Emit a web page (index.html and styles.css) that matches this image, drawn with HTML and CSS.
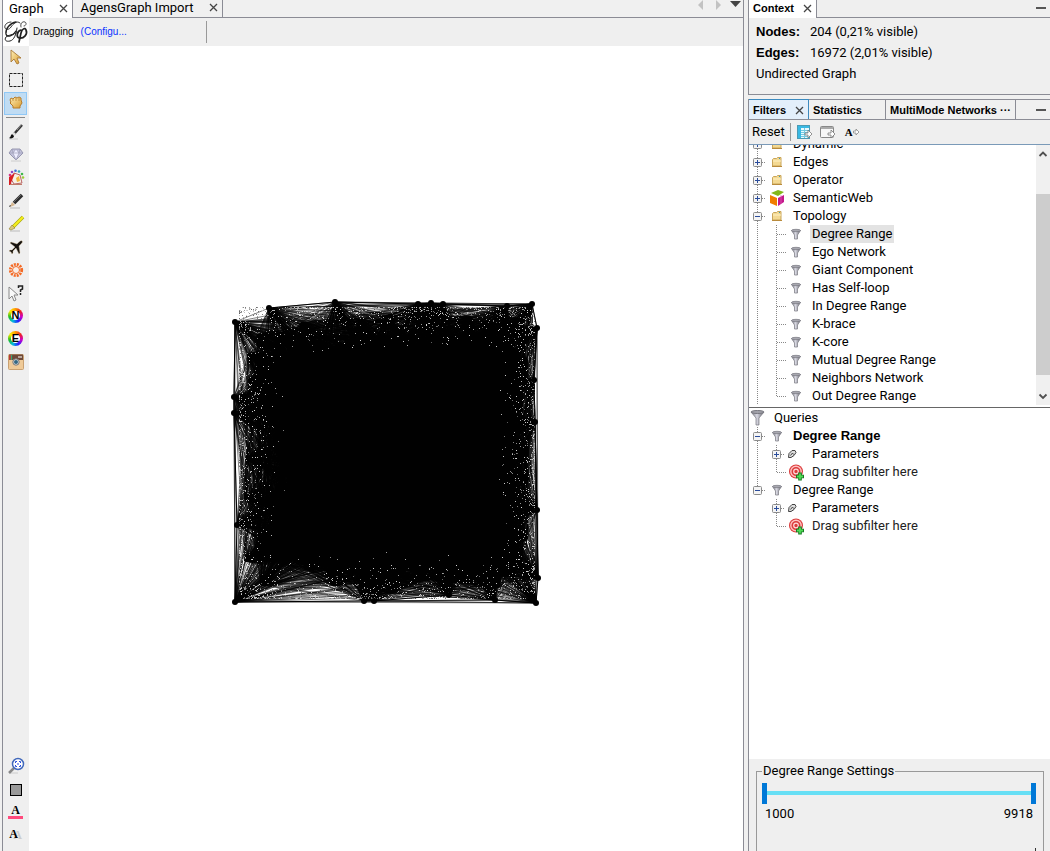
FILE: index.html
```html
<!DOCTYPE html>
<html lang="en">
<head>
    <meta charset="utf-8">
    <meta name="viewport" content="width=device-width, initial-scale=1">
    <title>Gephi</title>
    <link rel="stylesheet" href="styles.css">
</head>
<body>
    <!-- shared icons -->
    <svg class="defs" aria-hidden="true">
        <defs>
            <linearGradient id="gold" x1="0" y1="0" x2="1" y2="1"><stop offset="0" stop-color="#fff0b8"/><stop offset="1" stop-color="#d99a2b"/></linearGradient>
            <linearGradient id="steel"><stop offset="0" stop-color="#77777f"/><stop offset=".45" stop-color="#d8d8e2"/><stop offset="1" stop-color="#66666e"/></linearGradient>
            <symbol id="close" viewBox="0 0 9 9"><path d="M1 1l7 7M8 1L1 8" stroke="#444" stroke-width="1.3"/></symbol>
            <symbol id="twig-mid" viewBox="0 0 15 18"><path d="M4.500 0v18M5 9.500h9" class="dots"/></symbol>
            <symbol id="twig-end" viewBox="0 0 15 18"><path d="M4.500 0v9M5 9.500h9" class="dots"/></symbol>
            <symbol id="minus" viewBox="0 0 15 18"><path d="M4.500 0v18M9 9.500h4" class="dots"/><rect x=".5" y="5.500" width="8" height="8" rx="1" fill="#f4f4f4" stroke="#8b8b8b"/><path d="M2 9.500h5" stroke="#2a4c9b"/></symbol>
            <symbol id="plus" viewBox="0 0 15 18"><path d="M4.500 0v18M9 9.500h4" class="dots"/><rect x=".5" y="5.500" width="8" height="8" rx="1" fill="#f4f4f4" stroke="#8b8b8b"/><path d="M2 9.500h5M4.500 7v5" stroke="#2a4c9b"/></symbol>
            <symbol id="minus-end" viewBox="0 0 15 18"><path d="M4.500 0v9M9 9.500h4" class="dots"/><rect x=".5" y="5.500" width="8" height="8" rx="1" fill="#f4f4f4" stroke="#8b8b8b"/><path d="M2 9.500h5" stroke="#2a4c9b"/></symbol>
            <symbol id="folder" viewBox="0 0 18 18"><path d="M4.500 13V6.500l1-1h3l1-1h3.500V13z" fill="#f4d992" stroke="#c9a55a"/><path d="M5 8h8" stroke="#fff2c6"/><path d="M4 13.500h10" stroke="#b98b3c"/><path d="M11 5.500h1" stroke="#3c9ab8"/></symbol>
            <symbol id="funnel" viewBox="0 0 18 18"><path d="M4.500 5.500h9L10.500 10v4h-3v-4z" fill="url(#steel)" stroke="#85858d" stroke-width=".8"/><ellipse cx="9" cy="5.500" rx="4.500" ry="1.200" fill="#a8a8b0" stroke="#77777f" stroke-width=".7"/></symbol>
            <symbol id="cube" viewBox="0 0 18 18"><path d="M3 4l7-3 6 2-6 4z" fill="#83b81a"/><path d="M2 6l7 3v8l-7-3z" fill="#f07d00"/><path d="M10 9l6-3v7l-6 4z" fill="#c4188c"/><path d="M13 6v9" stroke="#e45fb8" stroke-width=".7"/></symbol>
            <symbol id="wrench" viewBox="0 0 18 18"><path d="M1.500 12.500l.5-4L5 5.500h3l1 2-2 3-3 2z" fill="#ddd" stroke="#444"/><path d="M3.500 10.500l2-2.500 1 1.500" fill="none" stroke="#444"/></symbol>
            <symbol id="target" viewBox="0 0 18 18"><circle cx="9" cy="8.500" r="7" fill="#dc3c3c"/><circle cx="9" cy="8.500" r="5.200" fill="none" stroke="#ffc2c2" stroke-width="1.400"/><circle cx="9" cy="8.500" r="2.300" fill="none" stroke="#ffdada" stroke-width="1.200"/><path d="M13 9.500v8M9 13.500h8" stroke="#167a22" stroke-width="3.600"/><path d="M13 10.500v6M10 13.500h6" stroke="#4fdc55" stroke-width="1.800"/></symbol>
        </defs>
    </svg>

    <div class="app">
        <main class="graph-window">
            <div class="tabs">
                <div class="tab active"><button>Graph</button><button class="close" aria-label="Close Graph"><svg><use href="#close"/></svg></button></div>
                <div class="tab import"><button>AgensGraph Import</button><button class="close" aria-label="Close Import"><svg><use href="#close"/></svg></button></div>
                <div class="tab-nav">
                    <svg viewBox="0 0 46 12"><path d="M6 0v10L1 5z" fill="#c2c2c2"/><path d="M19 0v10l5-5z" fill="#c2c2c2"/><path d="M33 1h11l-5.500 6z" fill="#444"/></svg>
                </div>
            </div>
            <div class="props">
                <svg class="logo" viewBox="0 0 26 28"><g fill="none" stroke="#222" stroke-linecap="round"><path d="M17 5C14 2 10 6 8 9c-2 3-5 3-6 1-1-3 2-6 6-6" stroke-width=".9"/><path d="M13 4C7 5 2 11 3 16c1 4 7 2 10-3" stroke-width="1.300"/><path d="M14 10c-1 7-3 12-7 13-4 1-6-1-4-4 2-2 7-2 12-5" stroke-width="1"/><path d="M18 12c-4 1-5 7-2 8 5 1 9-4 7-8-1-3-4-1-5 3l-2 9" stroke-width="1.700"/><path d="M18 9c-1-3 1-6 4-5 2 1 1 4-1 4" stroke-width=".8"/></g></svg>
                <span class="mode">Dragging</span>
                <a class="configure" href="#">(Configu...</a>
                <span class="divider"></span>
            </div>
            <div class="work">
                <div class="tools">
                    <button aria-label="Select"><svg viewBox="0 0 18 18"><path d="M4 2v12l3-3 3 5 2-1-2-5h4z" fill="url(#gold)" stroke="#a87835" stroke-width=".9"/></svg></button>
                    <button aria-label="Rectangle selection"><svg viewBox="0 0 18 18"><rect x="2.500" y="2.500" width="13" height="13" fill="none" stroke="#222" stroke-dasharray="3 1"/></svg></button>
                    <button class="on" aria-label="Drag"><svg viewBox="0 0 18 18"><path d="M4 8L3 6l1-2 2 1 2-2 2 1 2-1 2 1v2l1 3-2 3v2H6v-2L3 9z" fill="url(#gold)" stroke="#b67b28"/><path d="M6 5v2M9 4v3M12 4v3" stroke="#b67b28" stroke-width=".7"/></svg></button>
                    <hr>
                    <button aria-label="Painter"><svg viewBox="0 0 18 18"><path d="M2 16h9" stroke="#ccc"/><path d="M15 2L7 11" stroke="#333" stroke-width="2.500"/><path d="M15 1l-5 6" stroke="#aaa" stroke-width=".8"/><path d="M8 10l-2 2" stroke="#ddd" stroke-width="3"/><path d="M5 11l2 2c0 2-3 3-5 2 2-1 1-2 3-4z" fill="#111"/></svg></button>
                    <button aria-label="Sizer"><svg viewBox="0 0 18 18"><path d="M5 3h8l3 4-7 7-7-7z" fill="#c4c4dc" stroke="#8e8ea8" stroke-width=".9"/><path d="M2 7h14M6 7l3 7 3-7-3-4zM5 3l1 4M13 3l-1 4" fill="#eeeeff" stroke="#9d9db8" stroke-width=".7"/><path d="M4 15h10" stroke="#ccc"/></svg></button>
                    <button aria-label="Brush"><svg viewBox="0 0 18 18"><g><circle cx="3" cy="6" r="1.300" fill="#d2338a"/><circle cx="5" cy="3" r="1.300" fill="#8d46c7"/><circle cx="8.500" cy="1.800" r="1.300" fill="#3c6ed8"/><circle cx="12" cy="2.500" r="1.300" fill="#36a7b8"/><circle cx="15" cy="5" r="1.300" fill="#40b848"/><circle cx="16" cy="8.500" r="1.300" fill="#9dcc36"/></g><path d="M7 4l6 2 2 8-8 1-3-5z" fill="#f7f1e6" stroke="#b66"/><path d="M2 8l6-4-4 10 1 2H2z" fill="#d71f22"/><path d="M9 9l3-2 1 5-3 1z" fill="#f0b63e"/><path d="M3 15.500h12" stroke="#bf7b69"/></svg></button>
                    <button aria-label="Node pencil"><svg viewBox="0 0 18 18"><path d="M3 16h10" stroke="#bbb"/><path d="M15 3L7 11" stroke="#2b2b2b" stroke-width="3.500"/><path d="M14 3l-7 7" stroke="#777" stroke-width=".8"/><path d="M5 10l3 3-5 2z" fill="#d6b68e"/><path d="M3 13l1 1-2 1z" fill="#111"/></svg></button>
                    <button aria-label="Edge pencil"><svg viewBox="0 0 18 18"><path d="M3 16h10" stroke="#bbb"/><path d="M16 2L6 12" stroke="#aaa815" stroke-width="3.500"/><path d="M16 2L6 12" stroke="#f5f01c" stroke-width="2.200"/><path d="M5 10l3 3-4 2-2-1z" fill="#d8c77c" stroke="#8e7c23" stroke-width=".6"/></svg></button>
                    <button aria-label="Shortest path"><svg viewBox="0 0 18 18"><path d="M15 3c1 1 0 2-3 5l1 7-1 1-3-6-3 3v2l-1 1-1-2-2-1 1-1h2l3-3-5-4 1-1 6 2c2-2 4-4 5-3z" fill="#15110d" stroke="#d6c19b" stroke-width=".4"/></svg></button>
                    <button aria-label="Heat map"><svg viewBox="0 0 18 18"><circle cx="9" cy="9" r="5.700" fill="none" stroke="#f46a25" stroke-width="2.800" stroke-dasharray="2 1"/><circle cx="9" cy="9" r="3.500" fill="#f8eee8" stroke="#f46a25"/></svg></button>
                    <button aria-label="Edit"><svg viewBox="0 0 18 18"><path d="M2 3v12l3-3 2 5 2-1-2-5h4z" fill="#fafafa" stroke="#888"/><path d="M11.500 4V2h4v3l-2 1v2M13.500 9v2" fill="none" stroke="#222" stroke-width="1.500"/></svg></button>
                    <button aria-label="Node color"><span class="wheel">N</span></button>
                    <button aria-label="Edge color"><span class="wheel edge">E</span></button>
                    <button aria-label="Screenshot"><svg viewBox="0 0 18 18"><rect x="1.500" y="1.500" width="15" height="15" rx="1" fill="#efca98" stroke="#c9a172"/><path d="M2 1.500h14V7H2z" fill="#6d4838"/><path d="M3 2v5" stroke="#e33" stroke-width="1.200"/><path d="M4.500 2v5" stroke="#3a7" stroke-width="1.200"/><path d="M11 3h4v2h-4z" fill="#b9a69b"/><circle cx="9" cy="9" r="3.200" fill="#ddd" stroke="#777"/><circle cx="9" cy="9" r="2" fill="#336783"/></svg></button>
                    <span class="spring"></span>
                    <button aria-label="Center on graph"><svg viewBox="0 0 18 18"><path d="M3 16h8" stroke="#ccc"/><path d="M7 11l-5 5" stroke="#888" stroke-width="2.500"/><circle cx="11" cy="7" r="5.500" fill="#fff" stroke="#4269bb" stroke-width="1.500"/><path d="M8.500 6V4.500H10M12 4.500h1.500V6M13.500 8v1.500H12M10 9.500H8.500V8" fill="none" stroke="#2a4edb"/><path d="M10 7h2" stroke="#2a4edb"/></svg></button>
                    <button aria-label="Background color"><svg viewBox="0 0 18 18"><rect x="3.500" y="3.500" width="11" height="11" fill="#999" stroke="#000"/></svg></button>
                    <button aria-label="Label color"><span class="letter pink">A</span></button>
                    <button aria-label="Label size"><span class="letter shadow">A</span></button>
                </div>
                <div class="view"><canvas id="graph" width="310" height="308"></canvas></div>
            </div>
        </main>

        <aside class="side">
            <section class="context">
                <div class="tabs">
                    <div class="tab active"><button>Context</button><button class="close" aria-label="Close Context"><svg><use href="#close"/></svg></button></div>
                    <button class="minimize" aria-label="Minimize"></button>
                </div>
                <dl>
                    <dt>Nodes:</dt><dd>204 (0,21% visible)</dd>
                    <dt>Edges:</dt><dd>16972 (2,01% visible)</dd>
                </dl>
                <p>Undirected Graph</p>
            </section>

            <section class="filters">
                <div class="tabs">
                    <div class="tab current"><button>Filters</button><button class="close" aria-label="Close Filters"><svg><use href="#close"/></svg></button></div>
                    <div class="tab stats"><button>Statistics</button></div>
                    <div class="tab"><button>MultiMode Networks ···</button></div>
                    <button class="minimize" aria-label="Minimize"></button>
                </div>
                <div class="filter-bar">
                    <button>Reset</button>
                    <span class="divider"></span>
                    <button aria-label="Export column"><svg viewBox="0 0 18 16"><rect x="1.500" y="1.500" width="12" height="13" fill="#e9faff" stroke="#4c9bb4"/><path d="M2 2h11v2H2zM2 4h3v10H2z" fill="#39b9e4"/><path d="M5 6.500h8M5 8.500h8M5 10.500h8M5 12.500h8M8.500 4v10" stroke="#75c9e0"/><path d="M9 9h3V6l4 4-4 4v-3H9z" fill="#fff" stroke="#777" stroke-width=".8"/></svg></button>
                    <button aria-label="Export workspace"><svg viewBox="0 0 18 16"><rect x="1.500" y="2.500" width="13" height="11" rx="1" fill="#f7f7f7" stroke="#888"/><path d="M2 4h12" stroke="#aaa" stroke-width="2"/><path d="M9 9h3V6l4 4-4 4v-3H9z" fill="#fff" stroke="#777" stroke-width=".8"/></svg></button>
                    <button class="hide-labels" aria-label="Hide labels"><span>A</span><svg viewBox="0 0 7 8"><path d="M.5 3H3V1l3 3-3 3V5H.5z" fill="#fff" stroke="#888" stroke-width=".8"/></svg></button>
                </div>
                <div class="library">
                    <ul class="tree">
                        <li class="more"><div class="row"><button class="twig" aria-label="Expand"><svg><use href="#plus"/></svg></button><svg class="icon"><use href="#folder"/></svg><span>Dynamic</span></div></li>
                        <li class="more"><div class="row"><button class="twig" aria-label="Expand"><svg><use href="#plus"/></svg></button><svg class="icon"><use href="#folder"/></svg><span>Edges</span></div></li>
                        <li class="more"><div class="row"><button class="twig" aria-label="Expand"><svg><use href="#plus"/></svg></button><svg class="icon"><use href="#folder"/></svg><span>Operator</span></div></li>
                        <li class="more"><div class="row"><button class="twig" aria-label="Expand"><svg><use href="#plus"/></svg></button><svg class="icon"><use href="#cube"/></svg><span>SemanticWeb</span></div></li>
                        <li class="more"><div class="row"><button class="twig" aria-label="Collapse"><svg><use href="#minus"/></svg></button><svg class="icon"><use href="#folder"/></svg><span>Topology</span></div>
                            <ul>
                                <li><div class="row"><svg class="twig"><use href="#twig-mid"/></svg><svg class="icon"><use href="#funnel"/></svg><span class="selected">Degree Range</span></div></li>
                                <li><div class="row"><svg class="twig"><use href="#twig-mid"/></svg><svg class="icon"><use href="#funnel"/></svg><span>Ego Network</span></div></li>
                                <li><div class="row"><svg class="twig"><use href="#twig-mid"/></svg><svg class="icon"><use href="#funnel"/></svg><span>Giant Component</span></div></li>
                                <li><div class="row"><svg class="twig"><use href="#twig-mid"/></svg><svg class="icon"><use href="#funnel"/></svg><span>Has Self-loop</span></div></li>
                                <li><div class="row"><svg class="twig"><use href="#twig-mid"/></svg><svg class="icon"><use href="#funnel"/></svg><span>In Degree Range</span></div></li>
                                <li><div class="row"><svg class="twig"><use href="#twig-mid"/></svg><svg class="icon"><use href="#funnel"/></svg><span>K-brace</span></div></li>
                                <li><div class="row"><svg class="twig"><use href="#twig-mid"/></svg><svg class="icon"><use href="#funnel"/></svg><span>K-core</span></div></li>
                                <li><div class="row"><svg class="twig"><use href="#twig-mid"/></svg><svg class="icon"><use href="#funnel"/></svg><span>Mutual Degree Range</span></div></li>
                                <li><div class="row"><svg class="twig"><use href="#twig-mid"/></svg><svg class="icon"><use href="#funnel"/></svg><span>Neighbors Network</span></div></li>
                                <li><div class="row"><svg class="twig"><use href="#twig-end"/></svg><svg class="icon"><use href="#funnel"/></svg><span>Out Degree Range</span></div></li>
                            </ul>
                        </li>
                    </ul>
                    <div class="scrollbar">
                        <svg viewBox="0 0 14 17"><path d="M3.500 11L7 7.500l3.500 3.500" fill="none" stroke="#505050" stroke-width="1.800"/></svg>
                        <span class="thumb"></span>
                        <svg viewBox="0 0 14 17"><path d="M3.500 6.500L7 10l3.500-3.500" fill="none" stroke="#505050" stroke-width="1.800"/></svg>
                    </div>
                </div>
                <div class="queries">
                    <div class="root"><svg viewBox="0 0 16 18"><path d="M2 3h13l-5 6v7H7V9z" fill="url(#steel)" stroke="#77777f" stroke-width=".7"/><ellipse cx="8.500" cy="3" rx="6.500" ry="1.500" fill="#a2a2aa" stroke="#77777f"/></svg><span>Queries</span></div>
                    <ul class="tree">
                        <li class="more"><div class="row"><button class="twig" aria-label="Collapse"><svg><use href="#minus"/></svg></button><svg class="icon"><use href="#funnel"/></svg><strong>Degree Range</strong></div>
                            <ul>
                                <li><div class="row"><button class="twig" aria-label="Expand"><svg><use href="#plus"/></svg></button><svg class="icon"><use href="#wrench"/></svg><span>Parameters</span></div></li>
                                <li><div class="row"><svg class="twig"><use href="#twig-end"/></svg><svg class="icon"><use href="#target"/></svg><span class="hint">Drag subfilter here</span></div></li>
                            </ul>
                        </li>
                        <li><div class="row"><button class="twig" aria-label="Collapse"><svg><use href="#minus-end"/></svg></button><svg class="icon"><use href="#funnel"/></svg><span>Degree Range</span></div>
                            <ul>
                                <li><div class="row"><button class="twig" aria-label="Expand"><svg><use href="#plus"/></svg></button><svg class="icon"><use href="#wrench"/></svg><span>Parameters</span></div></li>
                                <li><div class="row"><svg class="twig"><use href="#twig-end"/></svg><svg class="icon"><use href="#target"/></svg><span class="hint">Drag subfilter here</span></div></li>
                            </ul>
                        </li>
                    </ul>
                </div>
                <div class="settings">
                    <fieldset>
                        <legend>Degree Range Settings</legend>
                        <div class="range">
                            <input type="range" aria-label="Lower bound" min="1000" max="9918" value="1000">
                            <input type="range" aria-label="Upper bound" min="1000" max="9918" value="9918">
                        </div>
                        <div class="bounds"><span>1000</span><span>9918</span></div>
                        <div class="grip"></div>
                    </fieldset>
                </div>
            </section>
        </aside>
    </div>
    <script src="graph.js"></script>
</body>
</html>
```
FILE: styles.css
```css
* {
    box-sizing: border-box;
}

html, body {
    height: 100%;
}

body {
    margin: 0;
    background: #f0f0f0;
    color: #000;
    font: 13px/18px Roboto, Arial, sans-serif;
    overflow: hidden;
}

button {
    display: flex;
    align-items: center;
    justify-content: center;
    padding: 0;
    border: 0;
    background: none;
    color: inherit;
    font: inherit;
    white-space: nowrap;
}

ul {
    list-style: none;
    margin: 0;
    padding: 0;
}

strong, dt {
    font-family: "Liberation Sans", Arial, sans-serif;
    font-weight: bold;
}

.defs {
    display: block;
    width: 0;
    height: 0;
}

.dots {
    fill: none;
    stroke: #888;
    stroke-dasharray: 1 1;
}

.app {
    display: flex;
    gap: 4px;
    height: 100%;
    padding-left: 2px;
}

/* tabs */

.tabs {
    display: flex;
    height: 18px;
    flex: none;
    border-bottom: 1px solid #8b8c95;
}

.tab {
    display: flex;
    align-items: center;
    gap: 9px;
    height: 17px;
    padding: 0 4px;
    border-right: 1px solid #8b8c95;
    line-height: 15px;
}

.tab.active {
    height: 18px;
    padding-bottom: 2px;
    background: #fff;
}

.close svg {
    display: block;
    width: 9px;
    height: 9px;
}

.minimize {
    width: 10px;
    height: 2px;
    margin: 7px 4px 0 auto;
    background: #555;
}

.divider {
    width: 1px;
    height: 22px;
    background: #999;
}

/* graph window */

.graph-window {
    display: flex;
    flex-direction: column;
    flex: 1;
    min-width: 0;
    border: solid #8b8c95;
    border-width: 0 1px;
}

.graph-window .tab {
    padding-left: 6px;
    padding-bottom: 2px;
    gap: 15px;
}

.graph-window .import {
    padding-left: 8px;
}

.tab-nav {
    margin-left: auto;
}

.tab-nav svg {
    display: block;
    width: 46px;
    height: 12px;
}

.props {
    display: flex;
    align-items: center;
    height: 28px;
    flex: none;
    background: #efefef;
    font: 10px/18px "Liberation Sans", Arial, sans-serif;
}

.logo {
    width: 26px;
    height: 28px;
    background: #fff;
}

.mode {
    padding-left: 4px;
}

.configure {
    width: 132px;
    padding-left: 7px;
    color: #0a32ff;
    text-decoration: none;
}

.work {
    display: flex;
    flex: 1;
    min-height: 0;
}

.tools {
    display: flex;
    flex-direction: column;
    width: 26px;
    padding: 0 2px 2px 1px;
    background: #efefef;
}

.tools button {
    height: 23px;
    flex: none;
    align-items: flex-start;
    padding-top: 2px;
}

.tools svg {
    width: 18px;
    height: 18px;
}

.tools .on {
    padding-top: 1px;
    background: #c0dcf3;
    border: 1px solid #90c8f6;
}

.tools hr {
    width: 19px;
    margin: 2px 2px 3px;
    border: 0;
    border-top: 1px solid #888;
}

.tools .spring {
    flex: 1;
}

.tools .spring ~ button {
    height: 24px;
    padding-top: 4px;
}

.wheel {
    width: 15px;
    height: 15px;
    margin-top: 1px;
    border-radius: 50%;
    background: radial-gradient(circle, #fff 4px, transparent 5px), conic-gradient(#f90, #e22, #c0c, #22f, #0bd, #2b2, #fe0, #f90);
    font: bold 11px/15px "Liberation Sans", Arial, sans-serif;
}

.letter {
    width: 15px;
    font: bold 12px/11px "Liberation Serif", serif;
}

.letter.pink {
    border-bottom: 3px solid #ff4a7d;
}

.letter.shadow {
    padding-right: 4px;
    text-shadow: 4px 1px #ccc;
}

.view {
    display: grid;
    place-content: center;
    flex: 1;
    min-width: 0;
    padding-top: 8px;
    background: #fff;
    overflow: hidden;
}

.view canvas {
    display: block;
}

/* right column */

.side {
    display: flex;
    flex-direction: column;
    gap: 4px;
    width: 302px;
}

.context {
    height: 95px;
    flex: none;
    border: solid #8b8c95;
    border-width: 0 0 1px 1px;
    background: #efefef;
}

.side .tabs {
    font: bold 11px/15px "Liberation Sans", Arial, sans-serif;
}

.context dl {
    display: grid;
    grid-template-columns: 54px 1fr;
    row-gap: 3px;
    margin: 5px 7px 3px;
}

.context dd {
    margin: 0;
}

.context p {
    margin: 0 7px;
}

.filters {
    display: flex;
    flex-direction: column;
    flex: 1;
    min-height: 0;
    border-left: 1px solid #8b8c95;
}

.filters .tabs {
    height: 21px;
    border-top: 1px solid #8b8c95;
}

.filters .tab {
    height: 19px;
    padding-top: 2px;
}

.filters .tab.current {
    background: #e3effb;
    border-right-color: #3c8abf;
    box-shadow: 0 -1px #3c8abf;
}

.filters .stats {
    width: 77px;
}

.filters .minimize {
    margin-top: 9px;
}

.filter-bar {
    display: flex;
    align-items: center;
    gap: 5px;
    height: 25px;
    flex: none;
    padding-left: 3px;
    border-bottom: 1px solid #7a9ab8;
    background: #efefef;
}

.filter-bar svg {
    width: 18px;
    height: 16px;
}

.filter-bar .divider {
    height: 18px;
}

.filter-bar .hide-labels {
    padding-left: 3px;
    font: bold 11px/16px "Liberation Serif", serif;
}

.filter-bar .hide-labels svg {
    width: 7px;
    height: 8px;
}

.library {
    display: flex;
    align-items: flex-end;
    height: 263px;
    flex: none;
    padding-bottom: 2px;
    border-bottom: 1px solid #666;
    background: #fff;
    overflow: hidden;
}

.tree {
    flex: 1;
    padding-left: 4px;
}

.tree ul {
    padding-left: 19px;
}

.more {
    background: linear-gradient(#888 1px, transparent 1px) 4px 0 / 1px 2px repeat-y;
}

.row {
    display: flex;
    height: 18px;
}

.twig {
    display: block;
    width: 15px;
    height: 18px;
    flex: none;
}

.twig svg {
    display: block;
    width: 15px;
    height: 18px;
}

.icon {
    width: 18px;
    height: 18px;
    margin-right: 5px;
    flex: none;
}

.row span, .row strong {
    padding: 0 2px;
}

.row .selected {
    background: #e3e3e3;
}

.row .hint {
    color: #222;
}

.scrollbar {
    display: flex;
    flex-direction: column;
    justify-content: space-between;
    width: 14px;
    height: 260px;
    background: #f0f0f0;
}

.scrollbar svg {
    width: 14px;
    height: 17px;
}

.thumb {
    height: 181px;
    margin-top: 18px;
    background: #cdcdcd;
}

.queries {
    flex: 1;
    min-height: 0;
    padding-top: 1px;
    background: #fff;
}

.root {
    display: flex;
    gap: 9px;
}

.root svg {
    width: 16px;
    height: 18px;
}

.settings {
    height: 92px;
    flex: none;
    padding: 3px 6px 0 7px;
    background: #efefef;
}

fieldset {
    height: 100%;
    margin: 0;
    padding: 0 7px 0 5px;
    border: 1px solid #999;
    border-bottom: 0;
}

legend {
    padding: 0 1px;
}

.range {
    display: grid;
    height: 26px;
    align-items: center;
    background: linear-gradient(#67dff5, #67dff5) center / 100% 4px no-repeat;
}

.range input {
    grid-area: 1 / 1;
    width: 100%;
    height: 21px;
    margin: 0;
    appearance: none;
    background: none;
    pointer-events: none;
}

.range input::-webkit-slider-thumb {
    appearance: none;
    width: 5px;
    height: 21px;
    background: #0078d7;
    pointer-events: auto;
}

.bounds {
    display: flex;
    justify-content: space-between;
    padding: 0 3px;
    line-height: 16px;
}

.grip {
    width: 1px;
    height: 3px;
    margin: 26px 0 0 auto;
    background: #333;
}
```
FILE: graph.js
```javascript
var ctx = document.getElementById('graph').getContext('2d');

// nodes on the hull of the layout
var hull = [
    [4, 23], [38, 9], [104, 3], [187, 5], [200, 4], [212, 5], [276, 7], [301, 5],
    [306, 29], [303, 81], [304, 123], [306, 211], [307, 279], [305, 304],
    [264, 301], [218, 296], [143, 302], [133, 302], [4, 303], [6, 226], [3, 114], [3, 98]
];
// nodes just inside it
var nodes = hull.concat([
    [17, 55], [70, 24], [130, 20], [158, 16], [240, 18], [262, 22], [292, 20],
    [296, 60], [297, 150], [297, 180], [296, 240], [290, 270], [268, 288],
    [240, 284], [190, 280], [160, 294], [101, 286], [104, 280], [30, 286],
    [14, 262], [14, 200], [15, 160], [18, 80]
]);

var seed = 7;
function random() {
    seed = (seed * 16807) % 2147483647;
    return seed / 2147483647;
}

while (nodes.length < 204) {
    nodes.push([26 + random() * 262, 34 + random() * 244]);
}

ctx.lineWidth = 0.5;
nodes.forEach(function(a, i) {
    for (var j = i + 1; j < nodes.length; j++) {
        if (random() < 0.8) {
            ctx.beginPath();
            ctx.moveTo(a[0], a[1]);
            ctx.lineTo(nodes[j][0], nodes[j][1]);
            ctx.stroke();
        }
    }
});

// small gaps left between the edges, thinning out towards the middle
for (var i = 0; i < 5200; i++) {
    var depth = 8 + Math.pow(random(), 2) * 48,
        along = 10 + random() * 285,
        side = Math.floor(random() * 4),
        grey = Math.floor(90 + random() * 130),
        x = side == 0 ? depth : side == 1 ? 310 - depth * 0.8 : along,
        y = side == 2 ? depth : side == 3 ? 308 - depth : along;
    ctx.fillStyle = 'rgb(' + grey + ',' + grey + ',' + grey + ')';
    if (random() > depth / 56) {
        ctx.fillRect(Math.floor(x), Math.floor(y), 1, 1);
    }
}

ctx.fillStyle = '#000';
hull.forEach(function(n) {
    ctx.beginPath();
    ctx.arc(n[0], n[1], 3, 0, Math.PI * 2);
    ctx.fill();
});

// outline between neighbouring hull nodes
ctx.lineWidth = 1;
ctx.beginPath();
hull.slice(1).concat([hull[0]]).forEach(function(n) {
    ctx.lineTo(n[0], n[1]);
});
ctx.stroke();
```
